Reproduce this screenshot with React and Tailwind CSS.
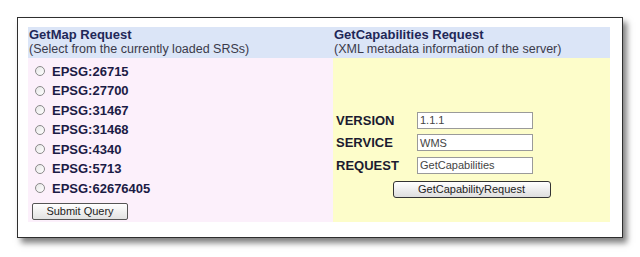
const srsList = ['EPSG:26715', 'EPSG:27700', 'EPSG:31467', 'EPSG:31468', 'EPSG:4340', 'EPSG:5713', 'EPSG:62676405'];

const params = [
  { label: 'VERSION', value: '1.1.1' },
  { label: 'SERVICE', value: 'WMS' },
  { label: 'REQUEST', value: 'GetCapabilities' },
];

function Radio() {
  return (
    <span className="inline-block h-[10px] w-[10px] rounded-full border border-[#8a8a8a] bg-gradient-to-br from-[#e6e6e6] to-white" />
  );
}

export default function App() {
  return (
    <div className="h-[257px] w-[640px] bg-white pl-[17px] pt-[17px] font-['Liberation_Sans',Arial,sans-serif]">
      <div className="flex h-[221px] w-[606px] border border-[#2e2e2e] bg-white pb-[15px] pl-[10px] pr-[12px] pt-[9px] shadow-[4px_5px_6px_rgba(0,0,0,0.5)]">
        {/* GetMap */}
        <div className="flex w-[305px] flex-col">
          <div className="h-[31px] bg-[#dbe5f7] pl-[1px] pt-[1px] leading-[14px]">
            <div className="text-[13px] font-bold text-[#1f2858]">GetMap Request</div>
            <div className="text-[12.5px] text-[#3a3a4a]">(Select from the currently loaded SRSs)</div>
          </div>
          <div className="flex-1 bg-[#fcf0fb] pl-[6px] pt-[4px]">
            {srsList.map((srs) => (
              <div key={srs} className="flex h-[19.5px] items-center gap-[7px] pl-[1px]">
                <Radio />
                <span className="text-[13px] font-bold text-[#1b1b45]">{srs}</span>
              </div>
            ))}
            <button className="ml-[-2px] mt-[2px] h-[17px] w-[96px] rounded-[2px] border border-[#555] bg-gradient-to-b from-white to-[#e2e2e2] text-[11px] leading-[15px] text-[#222]">
              Submit Query
            </button>
          </div>
        </div>

        {/* GetCapabilities */}
        <div className="flex flex-1 flex-col">
          <div className="h-[31px] bg-[#dbe5f7] pl-[1px] pt-[1px] leading-[14px]">
            <div className="text-[13px] font-bold text-[#1f2858]">GetCapabilities Request</div>
            <div className="text-[12.5px] text-[#3a3a4a]">(XML metadata information of the server)</div>
          </div>
          <div className="flex-1 bg-[#fdfdca] pl-[3px] pt-[51px]">
            {params.map((p) => (
              <div key={p.label} className="flex h-[22.5px] items-center">
                <span className="w-[81px] text-[13px] font-bold text-[#1b1b30]">{p.label}</span>
                <div className="flex h-[17px] w-[116px] items-center border border-[#9a9a9a] bg-white pl-[2px] text-[11px] text-[#444]">
                  {p.value}
                </div>
              </div>
            ))}
            <div className="flex justify-center pr-[3px] pt-[4px]">
              <button className="h-[17px] w-[158px] rounded-[3px] border border-[#333] bg-gradient-to-b from-white to-[#dedede] text-[11px] leading-[15px] text-[#222]">
                GetCapabilityRequest
              </button>
            </div>
          </div>
        </div>
      </div>
    </div>
  );
}
